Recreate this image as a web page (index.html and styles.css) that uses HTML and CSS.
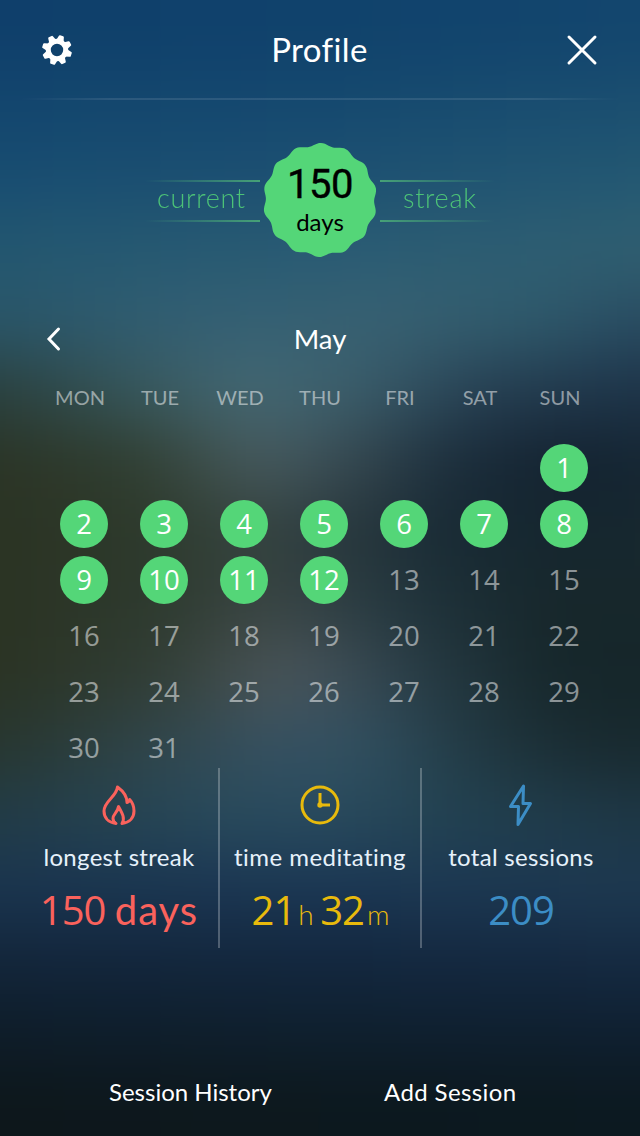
FILE: index.html
```
<!DOCTYPE html>
<html lang="en">
<head>
	<meta charset="UTF-8">
	<meta content="width=device-width, initial-scale=1.0" name="viewport">
	<title>Profile</title>
	<link rel="stylesheet" href="styles.css">
</head>
<body onload="S()">
<div class="screen">
	<div class="backdrop">
		<i class="s1"></i><i class="s2"></i><i class="s3"></i><i class="s4"></i>
		<i class="s5"></i><i class="s6"></i><i class="s7"></i><i class="s8"></i>
		<i class="s9"></i><i class="s10"></i><i class="s11"></i><i class="s12"></i>
		<i class="s13"></i><i class="s14"></i><i class="s15"></i><i class="s16"></i>
	</div>
	<main class="content">
		<header class="top">
			<svg class="gear" viewBox="-16 -16 32 32">
				<defs><path id="tooth" d="M-3.9-9L-2.6-14.2Q-2.4-15 -1.6-15H1.6Q2.4-15 2.6-14.2L3.9-9Z"/></defs>
				<g id="teeth" fill="#fff"></g>
				<circle r="8.7" fill="none" stroke="#fff" stroke-width="5"/>
			</svg>
			<h1>Profile</h1>
			<svg class="close" viewBox="0 0 32 32"><path d="M3 3L29 29M29 3L3 29"/></svg>
		</header>
		<div class="rule"></div>

		<section class="streak">
			<div class="side left"><span>current</span></div>
			<div class="badge">
				<svg class="seal" viewBox="-58 -58 116 116"><path id="seal"/></svg>
				<div class="count"><b>150</b><span>days</span></div>
			</div>
			<div class="side right"><span>streak</span></div>
		</section>

		<section class="month">
			<svg class="prev" viewBox="0 0 16 26"><path d="M12.5 3L3 13L12.5 23"/></svg>
			<h2>May</h2>
		</section>
		<div class="week">
			<span>MON</span><span>TUE</span><span>WED</span><span>THU</span><span>FRI</span><span>SAT</span><span>SUN</span>
		</div>
		<div class="days" id="days"></div>

		<section class="stats">
			<div class="stat red">
				<svg viewBox="0 0 40 44"><path d="M17 40.500C9 39.500 5 34.500 5 28C5 18 17.500 14 18.500 4C24 8 28 13.500 28 19.500C29.500 19 30.500 18 30.700 16.500C33.500 19.500 35 23.500 35 28C35 34.500 31 39.500 23 40.500C26 35.500 24 31.500 19.500 23.500C18.500 30 14 31 14 35.500C14 38 15.500 39.500 17 40.500Z"/></svg>
				<p>longest streak</p>
				<strong>150 <em>days</em></strong>
			</div>
			<div class="stat yellow">
				<svg viewBox="0 0 40 44"><circle cx="20" cy="22" r="18"/><path d="M20 10V22H30"/><circle class="hub" cx="20" cy="22" r="2.700"/></svg>
				<p>time meditating</p>
				<strong>21<small>h</small> 32<small>m</small></strong>
			</div>
			<div class="stat blue">
				<svg viewBox="0 0 40 44"><path d="M22.500 3L9.500 23.500H17.500L17 41.500L29.500 20.500H22Z"/></svg>
				<p>total sessions</p>
				<strong>209</strong>
			</div>
		</section>

		<footer>
			<a class="hist">Session History</a>
			<a class="add">Add Session</a>
		</footer>
	</main>
</div>
<script>
	var d=document;
	function gId(n){return d.getElementById(n);}
	// wavy outline of the streak badge, 14 lobes
	function seal() {
		let p = "";
		for (let a = 0; a < 360; a += 2) {
			let t = (a + 1) * Math.PI / 180;
			let r = 55.6 + 1.5 * Math.cos(14 * a * Math.PI / 180);
			p += (a ? "L" : "M") + (r * Math.sin(t)).toFixed(2) + " " + (-r * Math.cos(t)).toFixed(2);
		}
		gId("seal").setAttribute("d", p + "Z");
	}
	function S() {
		let teeth = "", days = "";
		for (let i = 0; i < 8; i++) teeth += `<use href="#tooth" transform="rotate(${18 + i * 45})"/>`;
		gId("teeth").innerHTML = teeth;
		// the first is a Sunday, sessions done up to the 12th
		for (let i = 1; i <= 31; i++) days += `<span class="day${i <= 12 ? " done" : ""}">${i}</span>`;
		gId("days").innerHTML = days;
		seal();
	}
</script>
</body>
</html>
```
FILE: styles.css
```
* {
	box-sizing: border-box;
}
body {
	margin: 0;
	background: #0d171c;
	color: #fff;
	font-family: Lato, "Open Sans", sans-serif;
}
h1, h2, p {
	margin: 0;
	font-weight: 400;
}
svg {
	display: block;
	flex: none;
}
.screen {
	display: grid;
	grid-template: 1136px / 640px;
	width: 640px;
	height: 1136px;
	overflow: hidden;
}
.backdrop, .content {
	grid-area: 1 / 1;
	min-width: 0;
	min-height: 0;
}
.content {
	position: relative;
	display: flex;
	flex-direction: column;
}

/* blurred photo: one colour band per 71px, bleeding 90px past each edge */
.backdrop {
	display: flex;
	flex-direction: column;
	filter: blur(32px);
	margin: -90px;
}
.backdrop i {
	flex: none;
	height: 71px;
}
.backdrop .s1, .backdrop .s16 {
	height: 161px;
}
.s1 { background: linear-gradient(90deg, #0f3f6b 11%, #10426c 50%, #13466e 89%); }
.s2 { background: linear-gradient(90deg, #13466e 11%, #15496f 50%, #1b4f70 89%); }
.s3 { background: linear-gradient(90deg, #184d71 11%, #1d5072 50%, #235872 89%); }
.s4 { background: linear-gradient(90deg, #235770 11%, #295b73 50%, #305f71 89%); }
.s5 { background: linear-gradient(90deg, #2a5669 11%, #335f73 34%, #386172 58%, #2f5a6c 76%, #294c62 89%); }
.s6 { background: linear-gradient(90deg, #2a403e 11%, #365559 26%, #446873 41%, #3c5f6c 53%, #263f52 70%, #1d3348 89%); }
.s7 { background: linear-gradient(90deg, #2b3425 11%, #303e31 28%, #485b5f 43%, #35474f 54%, #1b2d3b 66%, #13212f 80%, #152633 89%); }
.s8 { background: linear-gradient(90deg, #2b3323 11%, #2d3a2c 30%, #35433f 42%, #25353c 55%, #182a34 66%, #15262e 82%, #17282f 89%); }
.s9 { background: linear-gradient(90deg, #2b3323 11%, #2d3a2e 30%, #3a4544 44%, #2a3c42 55%, #1d3038 65%, #17272b 78%, #17272b 89%); }
.s10 { background: linear-gradient(90deg, #2a3323 11%, #313d35 30%, #4d575b 45%, #3d4d56 53%, #263a43 63%, #16272b 78%, #15262a 89%); }
.s11 { background: linear-gradient(90deg, #27362f 11%, #30454a 29%, #365161 43%, #315061 55%, #223a44 68%, #1a2c32 80%, #18292e 89%); }
.s12 { background: linear-gradient(90deg, #223c47 11%, #284a5c 38%, #294b5e 50%, #21404f 70%, #1e3745 89%); }
.s13 { background: linear-gradient(90deg, #1a3550 11%, #1b3754 50%, #1d3951 89%); }
.s14 { background: linear-gradient(90deg, #13263b 11%, #13273f 50%, #152a42 89%); }
.s15 { background: linear-gradient(90deg, #0e1d2a 11%, #0f202f 50%, #0f2031 89%); }
.s16 { background: linear-gradient(90deg, #0d171b 11%, #0c1920 89%); }

.top {
	display: flex;
	align-items: center;
	justify-content: space-between;
	height: 98px;
	padding: 0 42px 0 41px;
}
.gear {
	width: 32px;
	height: 32px;
	margin-top: 2px;
}
.close {
	width: 32px;
	height: 32px;
	margin-top: 2px;
}
.close path, .prev path {
	fill: none;
	stroke: #fff;
	stroke-width: 3;
	stroke-linecap: round;
}
h1 {
	font-size: 33px;
	line-height: 40px;
	letter-spacing: .4px;
}
.rule {
	height: 2px;
	margin: 0 20px;
	background: linear-gradient(90deg, transparent, rgba(255,255,255,.1) 15%, rgba(255,255,255,.1) 85%, transparent);
}

.streak {
	display: flex;
	align-items: center;
	justify-content: center;
	height: 116px;
	margin-top: 42px;
	gap: 3px;
	color: #54d678;
}
.side {
	display: flex;
	width: 115px;
	height: 42px;
	margin-top: 2px;
	font-size: 27px;
	font-weight: 300;
	line-height: 36px;
	letter-spacing: .7px;
	background-repeat: no-repeat;
	background-size: 100% 2px;
	background-position: 0 0, 0 100%;
}
.side span {
	opacity: .85;
}
.left {
	--fade: linear-gradient(90deg, transparent, #46a177);
	background-image: var(--fade), var(--fade);
	padding-left: 12px;
}
.right {
	--fade: linear-gradient(270deg, transparent, #46a177);
	background-image: var(--fade), var(--fade);
	padding-left: 23px;
}
.badge {
	display: grid;
	width: 116px;
	height: 116px;
	margin: 0 -1px;
}
.seal, .count {
	grid-area: 1 / 1;
}
.seal {
	fill: #54d678;
}
.count {
	display: flex;
	flex-direction: column;
	align-items: center;
	padding-top: 19px;
	color: #000;
	position: relative;
}
.count b {
	font: 400 40px/47px Roboto, sans-serif;
	letter-spacing: -.5px;
	-webkit-text-stroke: .4px #000;
}
.count span {
	font-size: 24px;
	line-height: 28px;
}

.month {
	display: grid;
	grid-template-columns: 40px 1fr 40px;
	align-items: center;
	height: 40px;
	margin: 61px 46px 0;
}
.prev {
	width: 16px;
	height: 26px;
}
h2 {
	font-size: 27.5px;
	line-height: 36px;
	text-align: center;
}
.week {
	display: grid;
	grid-template-columns: repeat(7, 80px);
	margin: 26px 0 0 40px;
	font-size: 20px;
	line-height: 24px;
	text-align: center;
	color: rgba(255,255,255,.5);
}
.days {
	display: grid;
	grid-template-columns: repeat(7, 48px);
	grid-auto-rows: 48px;
	gap: 8px 32px;
	margin: 35px 0 0 60px;
}
.day {
	border-radius: 50%;
	font: 400 27.5px/47px "Open Sans", sans-serif;
	text-align: center;
	color: rgba(255,255,255,.5);
}
.day:first-child {
	grid-column: 7;
}
.done {
	background: #54d678;
	color: #fff;
}

.stats {
	display: grid;
	grid-template-columns: 200px 202px 202px;
	height: 180px;
	margin: -4px 0 0 18px;
}
.stat {
	display: flex;
	flex-direction: column;
	align-items: center;
	padding-top: 15px;
	white-space: nowrap;
}
.red {
	padding-left: 2px;
}
.stat + .stat {
	border-left: 2px solid rgba(255,255,255,.25);
}
.blue {
	padding-right: 2px;
}
.stat svg {
	width: 40px;
	height: 44px;
	fill: none;
	stroke: currentColor;
	stroke-width: 3;
	stroke-linejoin: round;
}
.stat .hub {
	fill: currentColor;
	stroke: none;
}
.stat p {
	margin-top: 15px;
	font-size: 24px;
	line-height: 30px;
	letter-spacing: .3px;
	word-spacing: 0;
	color: #e6f1fb;
}
.yellow p {
	letter-spacing: .45px;
}
.stat strong {
	margin-top: 12px;
	font: 500 40px/52px "Open Sans", sans-serif;
	letter-spacing: -1px;
}
.stat em {
	font: 400 40px Lato, sans-serif;
	letter-spacing: 1px;
}
.stat small {
	font: 300 28px Lato, sans-serif;
	margin-left: 3px;
}
.red { color: #fa625c; }
.yellow { color: #e8ba0c; word-spacing: -2px; }
.blue { color: #3c8dc5; }

footer {
	display: flex;
	height: 36px;
	margin-top: 126px;
	font-size: 24px;
	line-height: 36px;
}
.hist {
	margin-left: 109px;
	width: 275px;
}
.add {
	letter-spacing: .4px;
}
```
